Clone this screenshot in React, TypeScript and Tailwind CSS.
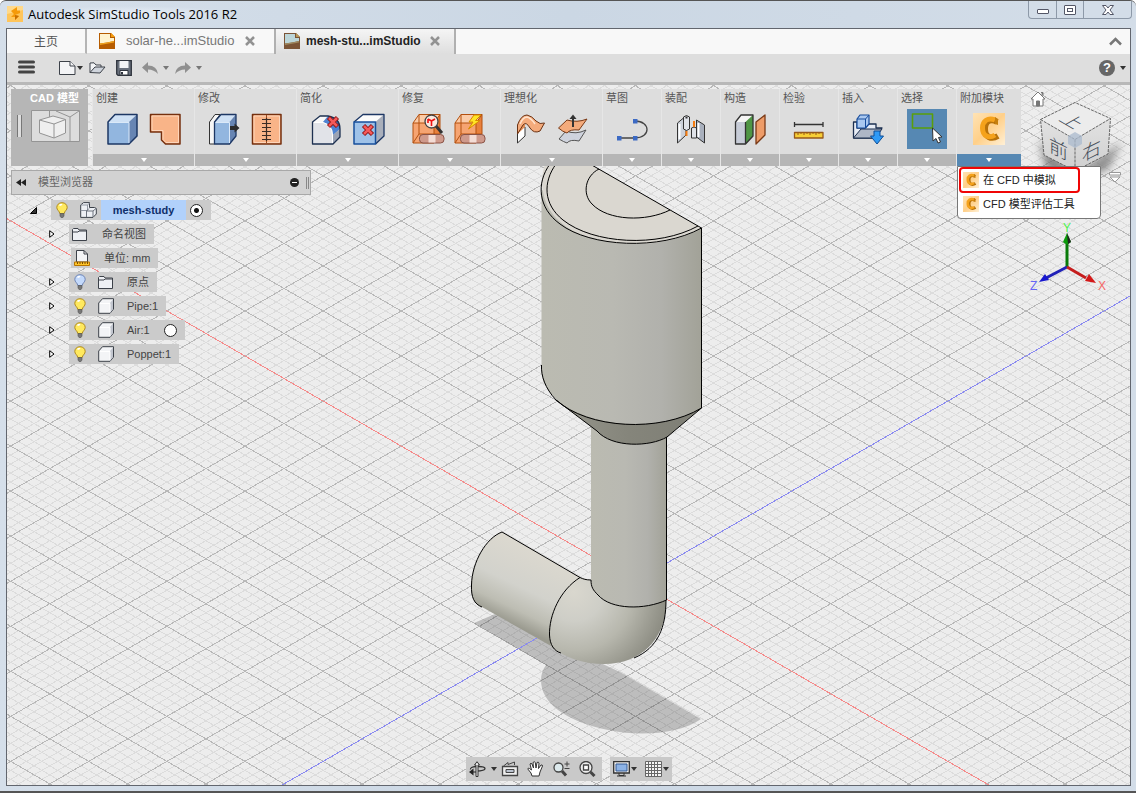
import React from "react";

const GRID_X = 39.05;
const GRID_Y = 22.52;
const ORIGIN = { x: 635.5, y: 581.2 };
const SLOPE = GRID_Y / GRID_X;

// vertical offsets of the isometric lines, relative to the origin
function gridPath(step: number, skip?: number) {
	const parts: string[] = [];
	const extent = 2000;
	const count = Math.ceil(2600 / step);
	for (let i = -count; i <= count; i++) {
		if (skip ? i % skip === 0 : i === 0) continue;
		const y = ORIGIN.y + i * step;
		const dy = SLOPE * extent;
		parts.push(`M${ORIGIN.x - extent} ${y - dy}L${ORIGIN.x + extent} ${y + dy}`);
		parts.push(`M${ORIGIN.x - extent} ${y + dy}L${ORIGIN.x + extent} ${y - dy}`);
	}
	return parts.join("");
}

const majorGrid = gridPath(GRID_Y * 2);
const minorGrid = gridPath((GRID_Y * 2) / 5, 5);

function Viewport() {
	return (
		<svg className="absolute inset-0 h-full w-full" aria-hidden="true">
			<defs>
				<linearGradient id="body" x1="0" x2="1" y1="0" y2="0">
					<stop offset="0" stopColor="#bbbbb1" />
					<stop offset="0.45" stopColor="#b9b9b2" />
					<stop offset="0.75" stopColor="#b1b1ac" />
					<stop offset="1" stopColor="#a2a298" />
				</linearGradient>
				<linearGradient id="cone" x1="0" x2="1" y1="0" y2="0">
					<stop offset="0" stopColor="#96968c" />
					<stop offset="0.5" stopColor="#85857b" />
					<stop offset="1" stopColor="#7e7e75" />
				</linearGradient>
				<linearGradient id="arm" gradientUnits="userSpaceOnUse" x1="540" x2="508" y1="555" y2="622">
					<stop offset="0" stopColor="#dbd8cf" />
					<stop offset="0.5" stopColor="#d2d2cc" />
					<stop offset="0.8" stopColor="#bdbdb3" />
					<stop offset="1" stopColor="#9a9a8f" />
				</linearGradient>
				<radialGradient id="elbow" gradientUnits="userSpaceOnUse" cx="574" cy="592" r="98">
					<stop offset="0" stopColor="#d9d7ce" />
					<stop offset="0.3" stopColor="#cecec7" />
					<stop offset="0.6" stopColor="#b7b7ad" />
					<stop offset="0.84" stopColor="#9a9a90" />
					<stop offset="1" stopColor="#88887e" />
				</radialGradient>
			</defs>
			<g transform="translate(-7 -85)">
				<g fill="none" shapeRendering="crispEdges">
					<path d={minorGrid} stroke="#dcdcdc" />
					<path d={majorGrid} stroke="#b8b8b8" />
				</g>
				<g fill="#000" fillOpacity="0.2">
					<path d="M474 623L495 614L620 672L701 719C680 734 640 737 608 730C565 721 541 703 541 680C541 674 543 669 546 665Z" />
				</g>
				<g fill="none" shapeRendering="crispEdges">
					<path d={`M${ORIGIN.x - 2000} ${ORIGIN.y - 2000 * SLOPE}l4000 ${4000 * SLOPE}`} stroke="#f58a8a" />
					<path d={`M${ORIGIN.x - 2000} ${ORIGIN.y + 2000 * SLOPE}l4000 ${-4000 * SLOPE}`} stroke="#8a8af0" />
				</g>
				<path d="M502 532L580 577.500L580 660L551 646L482 607C474 604 471 597 471 585C472 562 486 538 502 532Z" fill="url(#arm)" />
				<path d="M580 577.500L591 580V570H666L666 605C665 638 642 664 604 664C584 664 566 658 551 647C546 622 558 594 580 577.500Z" fill="url(#elbow)" />
				<path d="M591 425H666.500V600C645 610 611 610 598 595C593 590 591 587 591 580Z" fill="url(#body)" />
				<path d="M556 400L597 431C612 448 650 447 667 437L701 408Z" fill="url(#cone)" />
				<path d="M541.500 190V370C541.500 400 583 424 635.500 424C660 424 685 418 701 408V228Z" fill="url(#body)" />
				<path d="M701.500 228L590 164H545C535 195 548 243 635.500 244C660 244 685 238 701.500 228Z" fill="#dad7d0" />
				<g fill="none" stroke="#000">
					<path d="M590 164L701.500 228V408L667 437C650 447 612 448 597 431L556 400" />
					<path d="M550 164C536 183 538 208 560 224C590 247 660 251 701.500 228" />
					<path d="M556 164C543 182 543 204 563 220C593 244 658 248 698 226" />
					<path d="M599 169C585 176 582 194 592 204C608 221 646 222 670 210" />
					<path d="M541.500 365C541 376 545 388 556 400C588 429 660 433 701.500 408" />
					<path d="M666.500 437V600C645 610 611 610 598 595C593 590 591 587 591 580C586 580 583 579 580 577.500L502 532C486 538 472 562 471.500 585C471 597 474 604 482 607" />
					<path d="M580 577.500C560 590 549 615 549.500 635C550 645 554 651 561 653M666 600C666 627 658 648 634 658" />
				</g>
			</g>
		</svg>
	);
}

function ViewCube() {
	return (
		<div className="absolute right-0 top-0 h-[210px] w-[110px]">
			<svg viewBox="0 0 110 210" className="h-full w-full" aria-hidden="true">
				<defs>
					<filter id="soft" x="-30%" y="-50%" width="160%" height="200%">
						<feGaussianBlur stdDeviation="4" />
					</filter>
					<linearGradient id="face" x1="0" x2="0" y1="0" y2="1">
						<stop offset="0" stopColor="#e2e2e2" />
						<stop offset="1" stopColor="#cfcfcf" />
					</linearGradient>
				</defs>
				<path d="M24 63L56 92L94 66L86 82L56 92L28 82Z" fill="#555" stroke="#777" strokeWidth="6" filter="url(#soft)" opacity="0.8" />
				<path d="M55 17.500L90.500 33.500L55 54.500L20.500 34.500Z" fill="#ececec" />
				<path d="M20.500 34.500L55 54.500V86L24 70Z" fill="url(#face)" />
				<path d="M90.500 33.500L55 54.500V86L88 69Z" fill="url(#face)" />
				<path d="M20.500 34.500L55 17.500L90.500 33.500L88 69L55 86L24 70ZM20.500 34.500L55 54.500L90.500 33.500M55 54.500V86" fill="none" stroke="#666" strokeDasharray="3 1" />
				<path d="M48 51L55 47L62 51V59L55 63L48 59Z" fill="#a9b9ce" fillOpacity="0.75" />
				<g fill="#444c58" fontFamily="'Liberation Sans','Noto Sans CJK SC',sans-serif" fontSize="19" fontWeight="300">
					<text transform="matrix(1 .5 0 1 29 66)">前</text>
					<text transform="matrix(1 -.5 0 1 62 77)">右</text>
					<text transform="matrix(.87 .5 -.87 .5 38 35)">上</text>
				</g>
				<path d="M18 7L25 14H23V21H13V14H11Z" fill="#fff" stroke="#777" />
				<path d="M16.500 16h3v5h-3zM21 7.500h2v3" fill="#777" stroke="#777" />
				<path d="M89.500 87.500H100.500V90H89.500ZM90 92H100L95 97Z" fill="#fff" stroke="#999" />
				<path d="M47 182V157" stroke="#087a08" strokeWidth="3" />
				<path d="M47 148L51 157Q47 161 43 157Z" fill="#0a9b0a" />
				<path d="M47 148L51 157L48 159Z" fill="#222" />
				<path d="M47 182L26 193" stroke="#2222b8" strokeWidth="3" />
				<path d="M19 197L25 189L29 195Z" fill="#1616cf" />
				<path d="M47 182L66 193" stroke="#c51d1d" strokeWidth="3" />
				<path d="M76 198L69 189L65 196Z" fill="#d31919" />
				<g fontFamily="'Liberation Sans',sans-serif" fontSize="12">
					<text x="43" y="147" fill="#4cf24c">Y</text>
					<text x="10" y="205" fill="#6666f5">Z</text>
					<text x="78" y="205" fill="#f56666">X</text>
				</g>
			</svg>
		</div>
	);
}

function Pic({ size = 34, children }: { size?: number; children: React.ReactNode }) {
	return (
		<svg width={size} height={size} viewBox={`0 0 ${size} ${size}`} fill="none" strokeLinejoin="round" aria-hidden="true">
			{children}
		</svg>
	);
}

function RedCross({ x, y }: { x: number; y: number }) {
	return (
		<g transform={`translate(${x} ${y})`}>
			<path d="M-4.500 -4.500L4.500 4.500M4.500 -4.500L-4.500 4.500" stroke="#8e1212" strokeWidth="4.500" />
			<path d="M-4 -4L4 4M4 -4L-4 4" stroke="#f45a5a" strokeWidth="2.500" />
		</g>
	);
}

function OrangeBox() {
	return (
		<>
			<path d="M1 11L7 2.500H28L22 11Z" fill="#fbcba7" />
			<path d="M1 11H22V31H1Z" fill="#f6a471" />
			<path d="M22 11L28 2.500V22L22 31Z" fill="#e8803c" />
			<path d="M1 11L7 2.500H28V22L22 31H1ZM1 11H22L28 2.500M22 11V31M7 2.500V22L1 31M7 22H28" stroke="#b4500f" />
		</>
	);
}

function Pill({ x }: { x: number }) {
	return (
		<>
			<rect x={x} y="22.500" width="24.500" height="8.500" rx="3.500" fill="#cf9a8c" stroke="#8a5346" />
			<rect x={x + 9} y="23" width="7" height="7.500" fill="#f3dcd5" />
		</>
	);
}

const BoxIcon = () => (
	<Pic>
		<path d="M2 10L9 2.500H31L23 10Z" fill="#cfe1f5" />
		<path d="M2 10H23V32H2Z" fill="#92b6df" />
		<path d="M23 10L31 2.500V24L23 32Z" fill="#6785b3" />
		<path d="M2 10L9 2.500H31V24L23 32H2Z" stroke="#1d3764" strokeWidth="1.500" />
		<path d="M3 10.500H23V31" stroke="#dbe9f8" />
	</Pic>
);
const FlangeIcon = () => (
	<Pic>
		<path d="M2.500 2.500H32V32H17.500L13.500 28V20H2.500Z" fill="#f9b488" stroke="#75300f" strokeWidth="1.500" />
		<path d="M4 4H30.500V30.500H18L15 27.500V18.500H4Z" stroke="#fdd5ba" />
	</Pic>
);
const PushPullIcon = () => (
	<Pic>
		<path d="M1.500 10L7 2.500H12L6.500 10V32H1.500Z" fill="#f6f6f6" stroke="#333" />
		<path d="M6.500 10L13 2.500H28L21.500 10Z" fill="#cfe1f5" />
		<path d="M6.500 10H21.500V32H6.500Z" fill="#92b6df" />
		<path d="M21.500 10L28 2.500V24L21.500 32Z" fill="#6785b3" />
		<path d="M6.500 10L13 2.500H28V24L21.500 32H6.500Z" stroke="#1d3764" strokeWidth="1.300" />
		<path d="M7.500 10.500H21.500V31" stroke="#dbe9f8" />
		<path d="M22 14H26.500V11.500L31.500 16L26.500 20.500V18H22Z" fill="#2c2c2c" />
	</Pic>
);
const StitchIcon = () => (
	<Pic>
		<path d="M2.500 2.500H31V32H2.500Z" fill="#f9b488" stroke="#75300f" strokeWidth="1.500" />
		<path d="M4 4H29.500V30.500H4Z" stroke="#fdd5ba" />
		<path d="M16.500 3V31" stroke="#9a4a1f" />
		<path d="M12 7.500H21M12 11.500H21M12 15.500H21M12 19.500H21M12 23.500H21M12 27.500H21M16.500 6V29" stroke="#3a2c25" strokeWidth="1.200" />
	</Pic>
);
const RemoveFilletIcon = () => (
	<Pic>
		<path d="M2.500 10L10 4H18L13 10Z" fill="#f8f8f8" />
		<path d="M2.500 10H13Q23 13 23 23V32H2.500Z" fill="#e1e3e8" />
		<path d="M13 10L18 4Q30 6 30 17L23 23Q23 13 13 10Z" fill="#4e83d2" />
		<path d="M23 23L30 17V25L23 32Z" fill="#9ba3b4" />
		<path d="M2.500 10L10 4H18Q30 6 30 17V25L23 32H2.500Z" stroke="#1d3050" strokeWidth="1.300" />
		<path d="M4 10.500H13Q22 13 22.500 23V31" stroke="#fff" />
		<RedCross x={23} y={10} />
	</Pic>
);
const RemoveFaceIcon = () => (
	<Pic>
		<path d="M2 10L11 2.500H32L23.500 10Z" fill="#fbfbfb" />
		<path d="M23.500 10L32 2.500V24L23.500 32Z" fill="#a9afbb" />
		<path d="M2 10L11 2.500H32V24L23.500 32" stroke="#1d3764" strokeWidth="1.300" />
		<path d="M2 10H23.500V32H2Z" fill="#9fc2e8" stroke="#174f9c" strokeWidth="1.500" />
		<RedCross x={16} y={18} />
	</Pic>
);
const InspectRepairIcon = () => (
	<Pic>
		<OrangeBox />
		<Pill x={7.5} />
		<path d="M24 14L30 21" stroke="#333" strokeWidth="3" />
		<circle cx="19.500" cy="9.500" r="6.500" fill="#fbe9df" stroke="#444" strokeWidth="1.300" />
		<path d="M16 7L19.500 9L23 7M19.500 9V14M16 7V11" stroke="#e11" strokeWidth="1.600" />
	</Pic>
);
const AutoRepairIcon = () => (
	<Pic>
		<OrangeBox />
		<Pill x={6.5} />
		<path d="M20 3H27L21.500 8.500H26L14.500 17L19 10H15Z" fill="#ffe526" stroke="#d88a00" />
	</Pic>
);
const MidSurfaceIcon = () => (
	<Pic>
		<path d="M3.500 13V31L11 24V15Z" fill="#fff" stroke="#333" />
		<path d="M3.500 13V22L11 15V12Z" fill="#e28f58" />
		<path d="M3.500 13Q7 3 13 3Q18 4 22 9Q26 13 30.500 11L26 19Q20 22 16 16Q12 9 9 13L3.500 22Z" fill="#f4ab7c" stroke="#6b3213" />
		<path d="M6 12Q9 5 13 5Q17 6 21 12" stroke="#ffe2cc" strokeWidth="1.500" />
	</Pic>
);
const OffsetSurfaceIcon = () => (
	<Pic>
		<path d="M3 27L10 19Q20 23 30 18L23 29Q14 27 11 31Q8 30 3 27Z" fill="#cfd3dd" stroke="#555" />
		<path d="M2.500 16L11 8Q21 11 31 7L23 18Q14 17 11 21Q7 20 2.500 16Z" fill="#f4ab7c" stroke="#7a3a17" />
		<path d="M17 15V6" stroke="#333" strokeWidth="2" />
		<path d="M13.500 7L17 2.500L20.500 7Z" fill="#333" />
	</Pic>
);
const SketchIcon = () => (
	<Pic>
		<path d="M4 26H20C36 26 36 9 20 9" stroke="#444" strokeWidth="1.300" />
		<path d="M2 24h4.500v4.500H2zM18 24h4.500v4.500H18zM18 7h4.500v4.500H18z" fill="#3c6ac4" />
	</Pic>
);
const JointIcon = () => (
	<Pic>
		<path d="M3.500 11L9.500 6H12V23L3.500 31Z" fill="#ccd1da" stroke="#333" />
		<path d="M5.500 12V27" stroke="#fff" strokeWidth="2" />
		<path d="M9.500 5Q12.500 2 15.500 5V17Q12.500 20 9.500 17Z" fill="#dfe2e8" stroke="#333" />
		<path d="M12.500 4.500V6.500" stroke="#333" strokeWidth="2" />
		<path d="M22.500 8L30.500 13V31L22.500 25Z" fill="#a9b0bd" stroke="#333" />
		<path d="M24.500 11V25" stroke="#fff" strokeWidth="2" />
		<path d="M17.500 16Q20 14 22.500 16V26H17.500Z" fill="#dfe2e8" stroke="#333" />
		<path d="M12.500 19V24M20 9V15" stroke="#f47b10" strokeWidth="2" />
	</Pic>
);
const PlaneIcon = () => (
	<Pic>
		<path d="M2.500 10L8 3H20L12.500 10Z" fill="#f5f5f5" />
		<path d="M2.500 10H12.500V32H2.500Z" fill="#c7ccd7" />
		<path d="M12.500 10L20 3V24L12.500 32Z" fill="#4f9645" />
		<path d="M2.500 10L8 3H20V24L12.500 32H2.500ZM12.500 10V32" stroke="#333" strokeWidth="1.300" />
		<path d="M23 10L32 3V23L23 32Z" fill="#ee9c68" stroke="#7a3a17" strokeWidth="1.300" />
	</Pic>
);
const MeasureIcon = () => (
	<Pic>
		<path d="M2.500 12.500H31M2.500 10V15M31 10V15" stroke="#333" strokeWidth="1.300" />
		<path d="M2.500 20.500H31V26H2.500Z" fill="#f7cf35" stroke="#96591a" strokeWidth="1.300" />
		<path d="M6 20V23M9 20V22M12 20V23M15 20V22M18 20V23M21 20V22M24 20V23M27 20V22" stroke="#96591a" />
	</Pic>
);
const InsertIcon = () => (
	<Pic>
		<path d="M2.500 26V10H6V16H14L17 12H25V16H31L24 26Z" fill="#e8edf5" stroke="#1d3050" strokeWidth="1.300" />
		<path d="M2.500 26L10 17H31L24 26Z" fill="#aeb7c6" stroke="#1d3050" />
		<path d="M6 7L9 3H18V12L14.500 16H6Z" fill="#a9c8f0" stroke="#174c9c" strokeWidth="1.200" />
		<path d="M6 7H14.500L18 3M14.500 7V16" stroke="#174c9c" />
		<path d="M23 19H29V24H32.500L26 32L19.500 24H23Z" fill="#2f9af5" stroke="#0e4d96" />
	</Pic>
);
const SelectIcon = () => (
	<Pic size={40}>
		<path d="M5.500 5H25.500V19H5.500Z" stroke="#5a9e0a" strokeWidth="1.600" />
		<path d="M25.500 19L26 32L29 29.500L31 34L33.500 33L31.500 28.500L35 28Z" fill="#fff" stroke="#333" />
	</Pic>
);

function CfdLogo({ size }: { size: number }) {
	return (
		<svg width={size} height={size} viewBox="0 0 32 32" fill="none" aria-hidden="true">
			<defs>
				<linearGradient id="cfd" x1="0" x2="1" y1="0" y2="1">
					<stop offset="0" stopColor="#ffe3b5" />
					<stop offset="0.5" stopColor="#ffd08a" />
					<stop offset="1" stopColor="#fff0d6" />
				</linearGradient>
			</defs>
			<path d="M0 0H32V32H0Z" fill="url(#cfd)" />
			<path d="M24 9C18 5 12 8 12 16C12 24 18 27 25 23" stroke="#b8720a" strokeWidth="6" />
			<path d="M22 7C15 4 9.500 8 9.500 15C9.500 23 16 26 22 22" stroke="#f5a21b" strokeWidth="5" />
			<path d="M22 4L25 6V12L22 11Z" fill="#c67e0c" />
		</svg>
	);
}

const groups: { label: string; wide?: boolean; tools: { name: string; icon: React.FC }[] }[] = [
	{ label: "创建", wide: true, tools: [{ name: "长方体", icon: BoxIcon }, { name: "凸缘", icon: FlangeIcon }] },
	{ label: "修改", wide: true, tools: [{ name: "推拉", icon: PushPullIcon }, { name: "缝合", icon: StitchIcon }] },
	{ label: "简化", wide: true, tools: [{ name: "删除圆角", icon: RemoveFilletIcon }, { name: "删除面", icon: RemoveFaceIcon }] },
	{ label: "修复", wide: true, tools: [{ name: "检查", icon: InspectRepairIcon }, { name: "自动修复", icon: AutoRepairIcon }] },
	{ label: "理想化", wide: true, tools: [{ name: "中间面", icon: MidSurfaceIcon }, { name: "偏移面", icon: OffsetSurfaceIcon }] },
	{ label: "草图", tools: [{ name: "绘制", icon: SketchIcon }] },
	{ label: "装配", tools: [{ name: "联接", icon: JointIcon }] },
	{ label: "构造", tools: [{ name: "平面", icon: PlaneIcon }] },
	{ label: "检验", tools: [{ name: "测量", icon: MeasureIcon }] },
	{ label: "插入", tools: [{ name: "插入", icon: InsertIcon }] },
	{ label: "选择", tools: [{ name: "选择", icon: SelectIcon }] },
];

function Caret({ className = "" }: { className?: string }) {
	return (
		<svg width="6" height="4" viewBox="0 0 6 4" className={className} aria-hidden="true">
			<path d="M0 0H6L3 4Z" fill="currentColor" />
		</svg>
	);
}

function Ribbon() {
	return (
		<div className="relative z-10 mx-1 mt-1 flex">
			<div className="flex w-[77px] shrink-0 flex-col bg-[#b6b6b6] text-[11px] font-bold text-white">
				<button type="button" className="flex flex-col items-end pr-2 pt-px">
					<span className="pr-px leading-4 whitespace-nowrap">CAD 模型</span>
					<span className="mt-1 flex items-center gap-[9px]">
						<span className="h-[22px] w-[5px] border-x border-[#777] bg-[#ddd]" />
						<svg width="49" height="32" viewBox="0 0 49 32" fill="none" aria-hidden="true">
							<path d="M.5 .5H48.500V31.500H.5Z" fill="#dcdcdc" stroke="#949494" />
							<path d="M18.500 1V8M25 1L39 7L48 1M39 7V31" stroke="#949494" />
							<path d="M8.500 10L22 6L34.500 9.500V23L23 28L8.500 23Z" fill="#efefef" stroke="#949494" />
							<path d="M8.500 10L23 14L34.500 9.500M23 14V28" stroke="#949494" />
						</svg>
					</span>
				</button>
			</div>
			<div className="ml-1 flex">
				{groups.map((group) => (
					<section key={group.label} className={`flex shrink-0 flex-col border-l border-[#e6e6e6] bg-[#dddddd] ${group.wide ? "w-[102px]" : "w-[59px]"}`}>
						<h2 className="pl-[3px] pt-px text-[11px] leading-4 text-[#555]">{group.label}</h2>
						<div className="mt-[3px] flex h-10 items-center justify-center gap-2">
							{group.tools.map(({ name, icon: Icon }) => (
								<button key={name} type="button" aria-label={name} className={Icon === SelectIcon ? "bg-[#5688b3]" : ""}>
									<Icon />
								</button>
							))}
						</div>
						<button type="button" aria-label={`${group.label}菜单`} className="mt-[5px] flex h-3 items-center justify-center bg-[#b6b6b6]">
							<Caret className="text-white" />
						</button>
					</section>
				))}
				<section className="relative flex w-[65px] shrink-0 flex-col border-l border-[#e6e6e6] bg-[#dddddd]">
					<h2 className="pl-[3px] pt-px text-[11px] leading-4 text-[#555]">附加模块</h2>
					<button type="button" aria-label="CFD" className="mt-[3px] flex h-10 items-center justify-center">
						<CfdLogo size={32} />
					</button>
					<button type="button" aria-label="附加模块菜单" className="mt-[5px] flex h-3 items-center justify-center bg-[#5688b3]">
						<Caret className="text-white" />
					</button>
					<div role="menu" className="absolute left-0 top-full w-36 rounded-b-sm border border-[#777] bg-white px-px pb-[3px] text-[11px] text-[#222]">
						<button type="button" role="menuitem" className="flex h-[26px] w-[121px] items-center gap-1 rounded border-2 border-[#f00505] pl-[2px] whitespace-nowrap">
							<CfdLogo size={16} />在 CFD 中模拟
						</button>
						<button type="button" role="menuitem" className="flex h-[22px] items-center gap-1 pl-1 whitespace-nowrap">
							<CfdLogo size={16} />CFD 模型评估工具
						</button>
					</div>
				</section>
			</div>
		</div>
	);
}

function Bulb({ off = false }: { off?: boolean }) {
	return (
		<svg width="12" height="16" viewBox="0 0 12 16" aria-hidden="true">
			<path d="M6 .7C2.700 .7 .8 3 .8 5.500C.8 8 3.500 9 3.800 11.500H8.200C8.500 9 11.200 8 11.200 5.500C11.200 3 9.300 .7 6 .7Z" fill={off ? "#c3d9fb" : "#ffe95e"} stroke={off ? "#6d84b5" : "#b08a1c"} />
			<path d="M3.500 3.500Q5 2 6 3" stroke="#fff" strokeWidth="1.500" fill="none" />
			<path d="M4 11.500H8V14L7 15.500H5L4 14Z" fill="#777" stroke="#555" strokeWidth=".6" />
		</svg>
	);
}

function Folder() {
	return (
		<svg width="16" height="13" viewBox="0 0 16 13" fill="#eef0f4" stroke="#3c4149" aria-hidden="true">
			<path d="M.5 12.500V1.500L1.500 .5H6L7 2H14.500V12.500Z" />
			<path d="M.5 4H6L7 3H14" fill="none" />
		</svg>
	);
}

function Cube() {
	return (
		<svg width="17" height="16" viewBox="0 0 17 16" strokeLinejoin="round" aria-hidden="true">
			<path d="M.7 5L4.500 .7H15.500V11L12 15.300H.7Z" fill="#f3f4f6" stroke="#3c4149" />
			<path d="M12 5L15 1.500V11L12 15Z" fill="#c2c6cf" />
			<path d="M2 5.500H12V14" fill="none" stroke="#fff" />
		</svg>
	);
}

function Assembly() {
	return (
		<svg width="17" height="16" viewBox="0 0 17 16" strokeLinejoin="round" fill="#eef0f4" stroke="#3c4149" aria-hidden="true">
			<path d="M.7 3L3.500 .6H9.500V5.500H14.500L16.300 6.500V12L13 15.400H.7Z" />
			<path d="M7.500 3V8.500H.7M7.500 3H.7M7.500 3L9.500 1" fill="none" stroke="#9298a3" />
			<path d="M6.500 15V9L9 6.500M6.500 9H13V15M13 9L16 6.500" fill="none" stroke="#6c727d" />
		</svg>
	);
}

function Units() {
	return (
		<svg width="16" height="16" viewBox="0 0 16 16" aria-hidden="true">
			<path d="M2.500 12V.5H10L13.500 4V12Z" fill="#f3f4f6" stroke="#3c4149" />
			<path d="M10 .5V4H13.500" fill="none" stroke="#3c4149" />
			<path d="M.5 12H15.500V15.500H.5Z" fill="#ffc62b" stroke="#b87500" />
			<path d="M3.500 12V14M6 12V14M8.500 12V14M11 12V14M13.500 12V14" stroke="#7c4c00" />
		</svg>
	);
}

const nodes: { label: string; bulb?: "on" | "off"; icon: React.FC; radio?: boolean; leaf?: boolean }[] = [
	{ label: "命名视图", icon: Folder },
	{ label: "单位: mm", icon: Units, leaf: true },
	{ label: "原点", bulb: "off", icon: Folder },
	{ label: "Pipe:1", bulb: "on", icon: Cube },
	{ label: "Air:1", bulb: "on", icon: Cube, radio: true },
	{ label: "Poppet:1", bulb: "on", icon: Cube },
];

const radioClass =
	"m-0 size-[13px] appearance-none rounded-full border border-[#222] bg-white checked:bg-[radial-gradient(#111_0_2px,#fff_3px)]";

function Browser() {
	return (
		<aside className="relative mx-1 mt-1 w-[300px] text-[11px] text-[#444]">
			<header className="flex h-[25px] items-center border border-[#a8a8a8] bg-[#d2d2d2] pl-1 pr-px">
				<button type="button" aria-label="折叠">
					<svg width="10" height="7" viewBox="0 0 10 7" aria-hidden="true">
						<path d="M5 0V7L0 3.500ZM10 0V7L5 3.500Z" fill="#222" />
					</svg>
				</button>
				<h2 className="ml-3 text-[#666]">模型浏览器</h2>
				<button type="button" aria-label="最小化" className="ml-auto flex size-[9px] items-center justify-center rounded-full bg-[#222]">
					<span className="h-px w-[5px] bg-white" />
				</button>
				<span className="ml-[7px] h-3 w-[3px] border-x border-[#888]" />
			</header>
			<ul className="mt-[5px] flex flex-col gap-1">
				<li className="flex h-5 items-center pl-[19px]">
					<button type="button" aria-label="收起" className="mr-[14px]">
						<svg width="7" height="7" viewBox="0 0 7 7" aria-hidden="true">
							<path d="M6.500 .5V6.500H.5Z" fill="#333" stroke="#000" />
						</svg>
					</button>
					<span className="flex h-5 items-center bg-[#cbcbcb] pl-[5px] pr-2">
						<Bulb />
						<span className="ml-3"><Assembly /></span>
						<label htmlFor="active-root" className="ml-1 h-5 w-[85px] bg-[#b1d1fb] text-center font-bold leading-5 text-[#0f2f6b]">
							mesh-study
						</label>
						<input id="active-root" type="radio" name="active" defaultChecked className={`ml-1 ${radioClass}`} />
					</span>
				</li>
				{nodes.map(({ label, bulb, icon: Icon, radio, leaf }) => (
					<li key={label} className={`flex h-5 items-center ${leaf ? "pl-[60px]" : "pl-[38px]"}`}>
						{!leaf && (
							<button type="button" aria-label={`展开 ${label}`} className="mr-[14px]">
								<svg width="6" height="8" viewBox="0 0 6 8" aria-hidden="true">
									<path d="M.7 .7V7.300L5 4Z" fill="#fff" stroke="#000" />
								</svg>
							</button>
						)}
						<span className={`flex h-5 items-center bg-[#cbcbcb] ${bulb ? "pl-[5px] pr-2" : "pl-[3px] pr-2"}`}>
							{bulb && <span className="mr-3"><Bulb off={bulb === "off"} /></span>}
							<span className="flex w-[17px]"><Icon /></span>
							<label htmlFor={`active-${label}`} className={`whitespace-nowrap ${bulb ? "ml-3" : "ml-[13px]"}`}>{label}</label>
							{radio && <input id={`active-${label}`} type="radio" name="active" className={`ml-[14px] ${radioClass}`} />}
						</span>
					</li>
				))}
			</ul>
		</aside>
	);
}

function NavBar() {
	return (
		<nav className="relative mt-auto flex justify-center gap-2 pb-1 text-[#333]">
			<div className="flex h-6 items-center bg-[#c9c9c9] px-[3px]">
				<button type="button" aria-label="动态观察" className="flex items-center gap-[5px]">
					<svg width="17" height="16" viewBox="0 0 17 16" fill="none" stroke="#333" aria-hidden="true">
						<path d="M7 10Q16 10 16 7.500Q16 5.500 9 5.500M7 5.500Q1 6 1.500 8.500" strokeWidth="1.300" />
						<path d="M7 15.500V4H5.500L8 .7L10.500 4H9V15.500Z" fill="#eee" />
						<path d="M0 11L4.500 7.500V14.500ZM4 10.500H7V11.500H4Z" fill="#222" stroke="none" />
					</svg>
					<Caret />
				</button>
				<button type="button" aria-label="观察方向" className="ml-1">
					<svg width="18" height="16" viewBox="0 0 18 16" fill="none" stroke="#444" aria-hidden="true">
						<path d="M1.500 5.500H16.500V14.500H1.500Z" fill="#eee" strokeWidth="1.300" />
						<path d="M5 8.500H13V11.500H5Z" fill="#bcc4d0" />
						<path d="M2.500 5L7 1.500V3.500L13.500 1V4" />
					</svg>
				</button>
				<button type="button" aria-label="平移" className="ml-2">
					<svg width="17" height="16" viewBox="0 0 17 16" fill="#fff" stroke="#333" aria-hidden="true">
						<path d="M5 15L4 12L.8 8Q1 6.500 2.500 7.500L4.500 9L3 3Q4 1.500 5 3L6.500 7L6 1.500Q7.500 0 8.300 1.500L9 7L10 1.500Q11.500 .5 12 2L11.500 7.500L14 4Q15.500 3.500 15.500 5L13 11L12 15Z" />
					</svg>
				</button>
				<button type="button" aria-label="缩放" className="ml-[9px]">
					<svg width="17" height="16" viewBox="0 0 17 16" fill="none" stroke="#444" aria-hidden="true">
						<circle cx="5.500" cy="6.500" r="4.500" fill="#dce9ec" strokeWidth="1.300" />
						<path d="M9 10L13 14.500" strokeWidth="3" />
						<path d="M11.500 3H16.500M14 .5V5.500M11.500 7.500H16.500" />
					</svg>
				</button>
				<button type="button" aria-label="窗口缩放" className="ml-[9px] pr-[3px]">
					<svg width="17" height="16" viewBox="0 0 17 16" fill="none" stroke="#444" aria-hidden="true">
						<circle cx="7" cy="6.500" r="6" fill="#eee" strokeWidth="1.300" />
						<path d="M4.500 4H9.500V9H4.500Z" fill="#fff" strokeWidth="1.300" />
						<path d="M11.500 11L15.500 15" strokeWidth="3" />
					</svg>
				</button>
			</div>
			<div className="flex h-6 items-center gap-2 bg-[#c9c9c9] px-[3px]">
				<button type="button" aria-label="显示设置" className="flex items-center gap-px">
					<svg width="17" height="16" viewBox="0 0 17 16" fill="none" stroke="#333" aria-hidden="true">
						<path d="M.7 .7H16.300V12H.7Z" fill="#eee" strokeWidth="1.300" />
						<path d="M3 3H14V10H3Z" fill="#8db3e6" stroke="#345b94" />
						<path d="M6 12V14.500H11V12M4 15H13" />
					</svg>
					<Caret />
				</button>
				<button type="button" aria-label="栅格设置" className="flex items-center gap-px">
					<svg width="17" height="16" viewBox="0 0 17 16" fill="#f4f4f4" stroke="#666" aria-hidden="true">
						<path d="M.5 .5H16.500V15.500H.5ZM3.500 0V16M6.500 0V16M9.500 0V16M12.500 0V16M0 3.500H16M0 6.500H16M0 9.500H16M0 12.500H16" />
					</svg>
					<Caret />
				</button>
			</div>
		</nav>
	);
}

function DocIcon({ dim = false }: { dim?: boolean }) {
	return (
		<svg width="16" height="16" viewBox="0 0 16 16" aria-hidden="true">
			<path d="M0 0H12L16 4V16H0Z" fill={dim ? "#7b5436" : "#b65c00"} />
			<path d="M1 1H11V5H15V8L8 9.500L1 10.500Z" fill={dim ? "#bcd5d8" : "#fff3cf"} />
			<path d="M12 0L16 4H12Z" fill={dim ? "#b79857" : "#f59b0a"} />
			<path d="M1 10.500L8 9.500L15 8V9.500L1 12Z" fill={dim ? "#a08a60" : "#f0a21c"} />
		</svg>
	);
}

function CloseTab({ label }: { label: string }) {
	return (
		<button type="button" aria-label={label}>
			<svg width="10" height="10" viewBox="0 0 10 10" aria-hidden="true">
				<path d="M1 1L9 9M9 1L1 9" stroke="#929292" strokeWidth="2.500" />
			</svg>
		</button>
	);
}

function TitleBar() {
	return (
		<header className="flex h-7 shrink-0 items-start pl-[7px] pr-1">
			<svg width="16" height="16" viewBox="0 0 16 16" className="mt-[5px] shrink-0" aria-hidden="true">
				<path d="M0 0H16V16H0Z" fill="#ffd98a" />
				<path d="M0 8L16 4V16H0Z" fill="#ffc55a" />
				<path d="M4 5L10 1V4.500L13 4.500V7L8 9L12 10L8 14V11L4 11L7 8Z" fill="#f59a09" />
				<path d="M8 9L12 10L8 14Z" fill="#c96f00" />
			</svg>
			<h1 className="ml-[5px] mt-[5px] bg-[radial-gradient(closest-side,#e9f0f8,transparent)] font-['Open_Sans'] text-[13px] leading-4 text-black whitespace-nowrap">
				Autodesk SimStudio Tools 2016 R2
			</h1>
			<div className="ml-auto flex h-[18px] divide-x divide-[#8d99a8] rounded-b border border-t-0 border-[#8d99a8] bg-[#d3dde8]">
				<button type="button" aria-label="最小化窗口" className="flex w-7 items-center justify-center pt-[3px]">
					<span className="h-[5px] w-3 rounded-[1px] border border-[#535666] bg-white" />
				</button>
				<button type="button" aria-label="最大化窗口" className="flex w-[27px] items-center justify-center">
					<span className="flex h-[10px] w-3 items-center justify-center rounded-[1px] border border-[#535666] bg-white">
						<span className="h-1 w-[6px] border border-[#535666]" />
					</span>
				</button>
				<button type="button" aria-label="关闭窗口" className="flex w-[47px] items-center justify-center">
					<svg width="12" height="10" viewBox="0 0 12 10" aria-hidden="true">
						<path d="M.5 .5H4L6 3L8 .5H11.500L8 5L11.500 9.500H8L6 7L4 9.500H.5L4 5Z" fill="#fff" stroke="#535666" />
					</svg>
				</button>
			</div>
		</header>
	);
}

function Tabs() {
	return (
		<div className="flex h-[25px] shrink-0 items-stretch bg-[#f8f8f8] text-[12px]">
			<button type="button" className="w-20 border-b border-r-2 border-b-[#ddd] border-r-[#b5b5b5] pt-[2px] text-[#555]">主页</button>
			<div className="flex w-[187px] items-center border-b border-[#ddd] pl-[12px]">
				<DocIcon />
				<button type="button" className="ml-[11px] mr-3 w-[107px] text-left text-[13px] text-[#777] whitespace-nowrap">solar-he...imStudio</button>
				<CloseTab label="关闭 solar-he" />
			</div>
			<div className="flex w-[182px] items-center border-x-2 border-[#b0b0b0] bg-gradient-to-b from-[#f5f5f5] to-[#dedede] pb-px pl-2">
				<DocIcon dim />
				<button type="button" className="ml-[6px] mr-2 w-[116px] text-left font-bold text-[#222] whitespace-nowrap">mesh-stu...imStudio</button>
				<CloseTab label="关闭 mesh-stu" />
			</div>
			<button type="button" aria-label="折叠标签栏" className="ml-auto mr-2">
				<svg width="13" height="9" viewBox="0 0 13 9" fill="none" aria-hidden="true">
					<path d="M1 7.500L6.500 2L12 7.500" stroke="#777" strokeWidth="2.500" />
				</svg>
			</button>
		</div>
	);
}

function QuickBar() {
	return (
		<div className="flex h-[31px] shrink-0 items-center border-b-[3px] border-[#b8b8b8] bg-[#dedede] pl-[11px] pr-1 text-[#333]">
			<button type="button" aria-label="菜单" className="pb-[3px]">
				<svg width="17" height="14" viewBox="0 0 17 14" aria-hidden="true">
					<path d="M1.500 2H15.500M1.500 7H15.500M1.500 12H15.500" stroke="#444" strokeWidth="3" strokeLinecap="round" />
				</svg>
			</button>
			<button type="button" aria-label="新建" className="ml-6 flex items-center gap-px">
				<svg width="17" height="14" viewBox="0 0 17 14" fill="#f3f4f6" stroke="#3c4149" aria-hidden="true">
					<path d="M.5 .5H11L16 5V13.500H.5Z" />
					<path d="M11 .5V5H16" />
				</svg>
				<Caret />
			</button>
			<button type="button" aria-label="打开" className="ml-[6px]">
				<svg width="17" height="12" viewBox="0 0 17 12" fill="#f3f4f6" stroke="#3c4149" strokeLinejoin="round" aria-hidden="true">
					<path d="M1 10.500V1L5 .8L7 3H12V5" />
					<path d="M1 10.500L6 5H16L11 11Z" fill="#cfd4dc" />
				</svg>
			</button>
			<button type="button" aria-label="保存" className="ml-[10px]">
				<svg width="16" height="16" viewBox="0 0 16 16" aria-hidden="true">
					<path d="M.7 .7H15.300V15.300H2L.7 14Z" fill="#69707c" stroke="#2f343d" strokeWidth="1.300" />
					<path d="M3.500 1H12.500V8H3.500Z" fill="#f3f4f6" />
					<path d="M4 10.500H12V15H4Z" fill="#fff" stroke="#2f343d" />
					<path d="M6 12V14.500" stroke="#2f343d" strokeWidth="2" />
				</svg>
			</button>
			<button type="button" aria-label="撤消" className="ml-[10px] flex items-center gap-[5px] text-[#909090]">
				<svg width="16" height="12" viewBox="0 0 16 12" fill="currentColor" aria-hidden="true">
					<path d="M0 5.500L6 0V3.500Q15 3.500 16 12Q12 7.500 6 7.500V11Z" />
				</svg>
				<Caret className="text-[#777]" />
			</button>
			<button type="button" aria-label="恢复" className="ml-[6px] flex items-center gap-[5px] text-[#909090]">
				<svg width="16" height="12" viewBox="0 0 16 12" fill="currentColor" aria-hidden="true">
					<path d="M16 5.500L10 0V3.500Q1 3.500 0 12Q4 7.500 10 7.500V11Z" />
				</svg>
				<Caret className="text-[#777]" />
			</button>
			<button type="button" aria-label="帮助" className="ml-auto flex items-center gap-[5px]">
				<span className="flex size-4 items-center justify-center rounded-full bg-[#666] text-[13px] font-bold leading-4 text-white">?</span>
				<Caret />
			</button>
		</div>
	);
}

export default function App() {
	return (
		<div className="flex min-h-screen flex-col rounded-t-md border-b-2 border-t border-[#555] bg-gradient-to-r from-[#d5dfea] via-[#cbd7e4] to-[#d3dde8] font-['Liberation_Sans','Noto_Sans_CJK_SC',sans-serif]">
			<TitleBar />
			<div className="-mt-px mb-[5px] ml-[6px] mr-[5px] flex flex-1 flex-col border border-[#62666e]">
				<Tabs />
				<QuickBar />
				<main className="relative flex flex-1 flex-col overflow-hidden bg-[#ededed]">
					<Viewport />
					<ViewCube />
					<Ribbon />
					<Browser />
					<NavBar />
				</main>
			</div>
		</div>
	);
}
